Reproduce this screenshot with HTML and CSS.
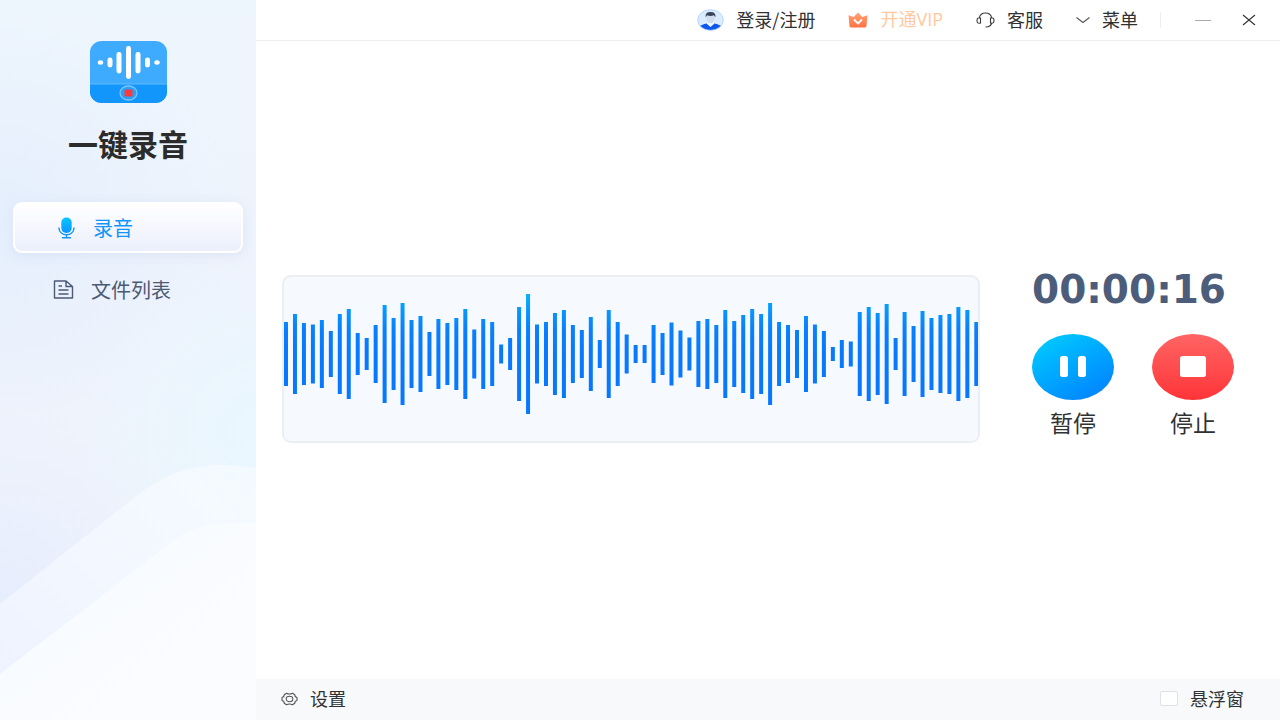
FILE: index.html
```html
<!DOCTYPE html>
<html lang="zh-CN">
<head>
<meta charset="utf-8">
<meta name="viewport" content="width=device-width, initial-scale=1">
<title>一键录音</title>
<link rel="stylesheet" href="styles.css">
</head>
<body>
<div class="app">
  <aside class="sidebar">
    <svg class="hills" viewBox="0 0 256 256" preserveAspectRatio="none" aria-hidden="true">
      <defs>
        <linearGradient id="hillBack" x1="0" y1="1" x2="1" y2="0"><stop offset="0" stop-color="#edf2ff"/><stop offset=".5" stop-color="#f3f7ff"/><stop offset="1" stop-color="#f4fbff"/></linearGradient>
        <linearGradient id="hillFront" x1="0" y1="0" x2="1" y2="1"><stop offset="0" stop-color="#f7fbff"/><stop offset="1" stop-color="#fbfcff"/></linearGradient>
      </defs>
      <path fill="url(#hillBack)" d="M0 140 L140 29 Q180 0 220 1 Q240 1 256 4 V256 H0 Z"/>
      <path fill="url(#hillFront)" d="M0 210 L155 91 Q188 61 220 59 H256 V256 H0 Z"/>
    </svg>
    <div class="brand">
      <svg class="logo" viewBox="0 0 77 62" aria-hidden="true">
        <defs><clipPath id="logoShape"><rect width="77" height="62" rx="12" ry="11"/></clipPath></defs>
        <g clip-path="url(#logoShape)">
          <rect width="77" height="62" fill="#3fabff"/>
          <rect y="43" width="77" height="19" fill="#1296fb"/>
          <path d="M0 43H77" stroke="#62bbff"/>
        </g>
        <g fill="#fff">
          <ellipse cx="10.500" cy="21.500" rx="2.700" ry="2.200"/>
          <rect x="17.500" y="16.500" width="5" height="10" rx="2.400"/>
          <rect x="26.500" y="11" width="5" height="21.500" rx="2.400"/>
          <rect x="36" y="5" width="5" height="33" rx="2.400"/>
          <rect x="45.500" y="11" width="5" height="21.500" rx="2.400"/>
          <rect x="55" y="16.500" width="5" height="10" rx="2.400"/>
          <ellipse cx="67" cy="21.500" rx="2.700" ry="2.200"/>
        </g>
        <ellipse cx="38.500" cy="52" rx="8.500" ry="7" fill="#2a9ff8" stroke="#7cc6ff" stroke-width="1.300"/>
        <rect x="34.500" y="48.500" width="8" height="7" rx="1" fill="#f83b3b"/>
      </svg>
      <h1 class="brand-name">一键录音</h1>
    </div>
    <nav class="nav">
      <a class="nav-item nav-item-active" href="#record" aria-current="page">
        <svg class="mic-icon" viewBox="0 0 17 22" aria-hidden="true">
          <defs><linearGradient id="micFill" x1="0" y1="0" x2="0" y2="1"><stop offset="0" stop-color="#06c8ff"/><stop offset="1" stop-color="#0a94ff"/></linearGradient></defs>
          <rect x="3.300" y="0.500" width="10.400" height="15.500" rx="5" fill="url(#micFill)"/>
          <path d="M1 11C1 20 16 20 16 11M8.500 17.700V20.500M4.500 20.700H12.500" fill="none" stroke="#1195f5" stroke-width="1.400" stroke-linecap="round"/>
        </svg>
        <span>录音</span>
      </a>
      <a class="nav-item" href="#files">
        <svg class="file-icon" viewBox="0 0 21 19" aria-hidden="true">
          <path d="M1.500 1H13L19.500 6.500V18H1.500ZM13 1V6.500H19.500M5.500 6H9M5.500 10H15.500M5.500 14H15.500" fill="none" stroke="#4c5a74" stroke-width="1.400" stroke-linejoin="round"/>
        </svg>
        <span>文件列表</span>
      </a>
    </nav>
  </aside>

  <div class="main">
    <header class="topbar">
      <button class="tool" type="button">
        <svg class="avatar" viewBox="0 0 27 22" aria-hidden="true">
          <defs><clipPath id="avatarShape"><ellipse cx="13.500" cy="11" rx="12.800" ry="10.300"/></clipPath></defs>
          <g clip-path="url(#avatarShape)">
            <rect width="27" height="22" fill="#dcecff"/>
            <path d="M2 22V18Q4 15.500 10 14.500H17Q23 15.500 25 18V22Z" fill="#0d57ee"/>
            <path d="M10 12H17V15L13.500 18L10 15Z" fill="#f3f6fb"/>
            <ellipse cx="13.500" cy="9" rx="4" ry="5.300" fill="#d0ddee"/>
            <path d="M8.800 8.500Q7.500 3 13.500 3Q19.500 3 18.300 8.500L17 6.300Q13 7.500 10 6.200Z" fill="#38465c"/>
          </g>
          <ellipse cx="13.500" cy="11" rx="12.800" ry="10.300" fill="none" stroke="#a9cfff" stroke-width=".8"/>
        </svg>
        <span>登录/注册</span>
      </button>
      <button class="tool tool-vip" type="button">
        <svg class="crown" viewBox="0 0 20 16" aria-hidden="true">
          <defs><linearGradient id="crownFill" x1="0" y1="0" x2="0" y2="1"><stop offset="0" stop-color="#ffa477"/><stop offset="1" stop-color="#ff7140"/></linearGradient></defs>
          <path d="M.5 3.300L5.700 5L10 .5L14.300 5L19.500 3.300L18.500 14Q18.300 15.500 16.500 15.500H3.500Q1.700 15.500 1.500 14Z" fill="url(#crownFill)"/>
          <path d="M6 7.500L10 11.500L14 7.500" fill="none" stroke="#fff" stroke-width="1.900"/>
        </svg>
        <span>开通VIP</span>
      </button>
      <button class="tool" type="button">
        <svg class="headset" viewBox="0 0 19 16" aria-hidden="true">
          <path d="M3.200 6C4 2.500 6 1 9.500 1S15 2.500 15.800 6M15.800 11Q14.500 15 10 15M4.500 6Q1 5 1 8.500T4.500 11ZM14.500 6Q18 5 18 8.500T14.500 11Z" fill="none" stroke="#3a3a3a" stroke-width="1.100" stroke-linecap="round"/>
        </svg>
        <span>客服</span>
      </button>
      <button class="tool" type="button">
        <svg class="chevron" viewBox="0 0 14 8" aria-hidden="true"><path d="M.5 1.500L7 6.500L13.500 1.500" fill="none" stroke="#555" stroke-width="1.100"/></svg>
        <span>菜单</span>
      </button>
      <div class="window-buttons">
        <button class="window-button" type="button" aria-label="最小化">
          <svg class="minimize" viewBox="0 0 16 12" aria-hidden="true"><path d="M0 6.500H16" stroke="#aaa"/></svg>
        </button>
        <button class="window-button" type="button" aria-label="关闭">
          <svg class="close" viewBox="0 0 14 12" aria-hidden="true"><path d="M1 1L13 11M13 1L1 11" stroke="#333" stroke-width="1.100"/></svg>
        </button>
      </div>
    </header>

    <main class="workspace">
      <div class="wave-panel">
        <svg class="wave" viewBox="0 0 694 164" role="img" aria-label="录音波形">
          <defs>
            <linearGradient id="waveStroke" gradientUnits="userSpaceOnUse" x1="0" y1="17" x2="0" y2="137">
              <stop offset="0" stop-color="#00b4ff"/><stop offset=".13" stop-color="#0797ff"/><stop offset=".3" stop-color="#087fff"/><stop offset=".5" stop-color="#0878ff"/><stop offset="1" stop-color="#0877ff"/>
            </linearGradient>
          </defs>
          <path id="waveBars" fill="none" stroke="url(#waveStroke)" stroke-width="4"/>
        </svg>
      </div>
      <section class="controls">
        <time class="timer">00:00:16</time>
        <div class="actions">
          <button class="action" type="button">
            <span class="disc disc-pause"><svg class="glyph" viewBox="0 0 26 21" aria-hidden="true"><rect width="8" height="21" rx="2.500" fill="#fff"/><rect x="18" width="8" height="21" rx="2.500" fill="#fff"/></svg></span>
            <span>暂停</span>
          </button>
          <button class="action" type="button">
            <span class="disc disc-stop"><svg class="glyph" viewBox="0 0 26 21" aria-hidden="true"><rect width="26" height="21" rx="2.500" fill="#fff"/></svg></span>
            <span>停止</span>
          </button>
        </div>
      </section>
    </main>

    <footer class="statusbar">
      <button class="tool" type="button">
        <svg class="gear" viewBox="0 0 17 14" aria-hidden="true">
          <path d="M5.500 1.200Q8.500 2.800 11.500 1.200L13.800 2.700Q13.500 4.800 16 5.500V8.500Q13.500 9.200 13.800 11.300L11.500 12.800Q8.500 11.200 5.500 12.800L3.200 11.300Q3.500 9.200 1 8.500V5.500Q3.500 4.800 3.200 2.700Z" fill="none" stroke="#555" stroke-width="1.100" stroke-linejoin="round"/>
          <ellipse cx="8.500" cy="7" rx="3.300" ry="2.700" fill="none" stroke="#555" stroke-width="1.100"/>
        </svg>
        <span>设置</span>
      </button>
      <label class="tool"><input class="checkbox" type="checkbox"><span>悬浮窗</span></label>
    </footer>
  </div>
</div>
<script src="app.js"></script>
</body>
</html>
```

FILE: styles.css
```css
* {
  box-sizing: border-box;
}

body {
  margin: 0;
  color: #303133;
  background: #fff;
  font-family: "Noto Sans CJK SC", "Noto Sans", sans-serif;
  font-size: 18px;
  line-height: 24px;
}

button {
  padding: 0;
  border: 0;
  background: none;
  color: inherit;
  font: inherit;
  cursor: pointer;
}

svg {
  display: block;
  flex: none;
}

.app {
  display: grid;
  grid-template-columns: 1fr 4fr;
  min-height: 100vh;
}

.sidebar {
  position: relative;
  padding: 41px 13px 0;
  background:
    radial-gradient(circle at 100% 60%, #e9f7fe 0, transparent 35%),
    radial-gradient(circle at 0 84%, #e6edfd 0, transparent 30%),
    radial-gradient(circle at 0 30%, #e5effd 0, transparent 40%),
    linear-gradient(180deg, #eef6fd 0, #eef3fc 40%, #f0f4fb 100%);
}

.hills {
  position: absolute;
  left: 0;
  bottom: 0;
  width: 100%;
  height: 256px;
}

.brand {
  display: flex;
  flex-direction: column;
  align-items: center;
  gap: 20px;
}

.logo {
  width: 77px;
  height: 62px;
}

.brand-name {
  margin: 0;
  color: #2b2b2b;
  font-size: 30px;
  line-height: 40px;
  font-weight: 700;
}

.nav {
  position: relative;
  display: flex;
  flex-direction: column;
  gap: 11px;
  margin-top: 39px;
  font-size: 20px;
}

.nav-item {
  display: flex;
  align-items: center;
  gap: 17px;
  height: 51px;
  padding-left: 38px;
  border: 2px solid transparent;
  border-radius: 9px;
  color: #4c5a74;
  text-decoration: none;
}

.nav-item-active {
  gap: 18px;
  padding-left: 43px;
  border-color: #fff;
  background: linear-gradient(180deg, #fff, #eceffd);
  box-shadow: 0 2px 12px #cfdaf099;
  color: #1195fa;
}

.mic-icon {
  width: 17px;
  height: 22px;
}

.file-icon {
  width: 21px;
  height: 19px;
}

.main {
  display: flex;
  flex-direction: column;
  min-width: 0;
}

.topbar {
  display: flex;
  align-items: center;
  justify-content: flex-end;
  gap: 33px;
  height: 41px;
  padding-right: 24px;
  border-bottom: 1px solid #eee;
}

.tool {
  display: flex;
  align-items: center;
  gap: 12px;
  white-space: nowrap;
}

.tool span {
  padding-bottom: 2px;
}

.tool-vip {
  color: #ffc9a0;
  font-family: "Open Sans", "Noto Sans CJK SC", sans-serif;
}

.avatar {
  width: 27px;
  height: 22px;
}

.crown {
  width: 20px;
  height: 16px;
}

.headset {
  width: 19px;
  height: 16px;
}

.chevron {
  width: 14px;
  height: 8px;
}

.window-buttons {
  display: flex;
  align-items: center;
  gap: 31px;
  height: 16px;
  margin-left: -11px;
  padding-left: 34px;
  border-left: 1px solid #eee;
}

.minimize {
  width: 16px;
  height: 12px;
}

.close {
  width: 14px;
  height: 12px;
}

.workspace {
  flex: 1;
  display: flex;
  align-items: center;
  gap: 52px;
  padding: 0 46px 2px 26px;
}

.wave-panel {
  flex: 1;
  min-width: 0;
  border: 2px solid #eceef4;
  border-radius: 9px;
  background: #f6faff;
}

.wave {
  width: 100%;
  height: auto;
}

.controls {
  display: flex;
  flex-direction: column;
  gap: 24px;
  padding-bottom: 12px;
}

.timer {
  color: #4c5d7b;
  font-family: "DejaVu Sans", sans-serif;
  font-size: 39px;
  line-height: 40px;
  font-weight: 700;
}

.actions {
  display: flex;
  gap: 38px;
}

.action {
  display: flex;
  flex-direction: column;
  align-items: center;
  gap: 7px;
  font-size: 23px;
  line-height: 30px;
}

.disc {
  display: flex;
  align-items: center;
  justify-content: center;
  width: 82px;
  height: 66px;
  border-radius: 50%;
}

.disc-pause {
  background: linear-gradient(150deg, #00c8ff 10%, #0084ff 90%);
}

.disc-stop {
  background: linear-gradient(180deg, #ff6464, #ff3539);
}

.glyph {
  width: 26px;
  height: 21px;
}

.statusbar {
  display: flex;
  align-items: center;
  justify-content: space-between;
  height: 41px;
  padding: 0 36px 2px 25px;
  background: #f7f9fb;
}

.gear {
  width: 17px;
  height: 14px;
}

.checkbox {
  appearance: none;
  width: 18px;
  height: 15px;
  margin: 0;
  border: 1px solid #dde1ea;
  border-radius: 2px;
  background: #fff;
}

.checkbox:checked {
  background: #1195fa;
}
```

FILE: app.js
```js
// Half-height of every bar in the waveform, left to right.
const levels = [
  32, 40, 31, 29.5, 34, 23, 40, 45, 21, 16, 29, 49, 36, 51, 34, 38, 22, 35, 31, 36, 45, 24.5, 35, 32, 9.5, 16,
  47, 60, 29.5, 32, 41, 44, 29, 24, 37, 14, 44, 32, 19.5, 9, 9, 29, 21, 31.5, 23.5, 16.5, 33, 35, 29, 44, 33, 39,
  45, 40, 51, 32, 29, 24, 38, 29.5, 23, 7, 14, 12.5, 42, 47, 41, 50, 16, 42, 28, 43, 36, 39, 40, 47, 44, 32
];
const middle = 77;
const first = 2;
const step = 8.965;

document.getElementById("waveBars").setAttribute("d", levels
  .map((level, i) => `M${first + i * step} ${middle - level}V${middle + level}`)
  .join(""));
```
